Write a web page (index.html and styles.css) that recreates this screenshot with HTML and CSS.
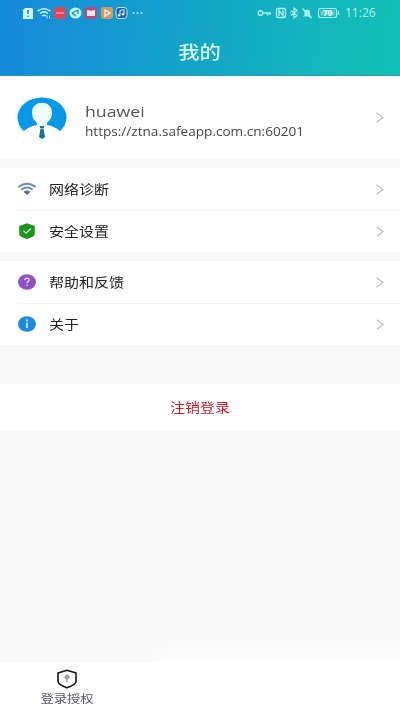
FILE: index.html
```html
<!DOCTYPE html>
<html lang="zh-CN">
<head>
<meta charset="utf-8">
<title>我的</title>
<link rel="stylesheet" href="styles.css">
</head>
<body>
<svg width="0" height="0" class="defs"><symbol id="chevron" viewBox="0 0 8 11"><path d="M.8.8 7 5.5.8 10.2" fill="none" stroke="#bebebe" stroke-width="1.3"/></symbol></svg>
<div class="app">
  <header class="header">
    <div class="status">
      <svg class="status-left" width="124" height="14" viewBox="0 0 124 14">
        <path d="M3 2h7l1 1v10H1V4z" fill="#c9fbf8"/><path d="M6 4v4M6 9.500v1.500" stroke="#187a9c" stroke-width="1.500"/>
        <g fill="none" stroke="#bdf3f5" stroke-width="1.500"><path d="M15.500 5.200q6.500-5 13 0M18 7.600q4-3.400 8 0M20 10q2-1.600 4 0"/><path d="M25 9.500v3M27.500 9.500v3" stroke-width="1"/></g>
        <rect x="32" y="1" width="12" height="12" rx="3" fill="#d8485c"/><path d="M34 7h8" stroke="#f7a9a9" stroke-width="1.200"/>
        <ellipse cx="53.500" cy="7" rx="6" ry="5.500" fill="#bdf6f5"/><path d="M50 7l6-3M50 7l4 3M56 4v4" fill="none" stroke="#1587b5" stroke-width="1.200"/>
        <rect x="63" y="1" width="12" height="12" rx="3" fill="#b64d79"/><path d="M65 4l4 .7 4-.7v6H65z" fill="#ffe3ed"/>
        <rect x="79" y="1" width="12" height="12" rx="3" fill="#c99a67"/><path d="M83 4l5 3-5 3z" fill="none" stroke="#fff2ce" stroke-width="1.300"/>
        <rect x="94" y="1.500" width="11" height="11" rx="3" fill="#2462a9" stroke="#b2e7fa"/><path d="M98 9V4.500l4-1V8" fill="none" stroke="#d8faff"/><circle cx="97" cy="9.300" r="1.300" fill="#d8faff"/><circle cx="101" cy="8.300" r="1.300" fill="#d8faff"/>
        <g fill="#b4f0ee"><circle cx="111.500" cy="7" r="1"/><circle cx="115.500" cy="7" r="1"/><circle cx="119.500" cy="7" r="1"/></g>
      </svg>
      <div class="status-right">
        <svg width="84" height="14" viewBox="0 0 84 14" fill="none" stroke="#a9f1e8" stroke-width="1.400">
          <circle cx="3.500" cy="7" r="2.300"/><path d="M6 7h8M10.500 7v2.500M13 7v2"/>
          <rect x="19.500" y="2.500" width="9" height="9" rx="1.500"/><path d="M22 10V4.500l4 5V4"/>
          <path d="M34 4.500l6 5-3 2.500V2l3 2.500-6 5M33 7h1M40.500 7h1" stroke-width="1.200"/>
          <path d="M46 10.500h8.500L53 9V6c0-3-5-3.500-5.500 0v3zM49 12h3" fill="#a9f1e8" stroke="none"/><path d="M45.500 2.500l9 9.500"/>
          <rect x="61.500" y="2.500" width="18" height="9" rx="2" stroke-width="1.200"/><rect x="63.500" y="4.500" width="14" height="5" fill="#63d3cf" stroke="none"/><path d="M81.500 5v4"/>
          <text x="70.500" y="10" class="battery">70</text>
        </svg>
        <span class="time">11:26</span>
      </div>
    </div>
    <h1><span class="wide">我的</span></h1>
  </header>
  <section class="profile">
    <svg class="avatar" width="50" height="42" viewBox="0 0 50 42">
      <ellipse cx="25" cy="20.500" rx="24.500" ry="20" fill="#0698e8"/>
      <path d="M3 42c2-8 7-12 17-14h10c10 2 15 6 17 14z" fill="#fff"/>
      <path d="M15 15.500c0-13 20-13 20 0 0 6-2.500 7.500-5 10.500v3H20v-3c-2.500-3-5-4.500-5-10.500z" fill="#effdff"/>
      <path d="M22.500 29h5L26.500 31.500h-3zM23.500 32h3l1.500 8-3 2-3-2z" fill="#16719f"/>
    </svg>
    <div class="identity"><div class="name">huawei</div><div class="url">https://ztna.safeapp.com.cn:60201</div></div>
    <svg class="chevron"><use href="#chevron"/></svg>
  </section>
  <section class="group">
    <div class="row">
      <svg class="icon" viewBox="0 0 18 16"><g fill="none" stroke="#6b89c5" stroke-width="2"><path d="M.4 6q8.600-6.500 17.200 0M3.300 8.700q5.700-4.400 11.400 0"/></g><path d="M5.500 10.700q3.500-2.400 7 0L9 14z" fill="#536ca8"/></svg>
      <span class="wide">网络诊断</span><svg class="chevron"><use href="#chevron"/></svg>
    </div>
    <div class="row">
      <svg class="icon" viewBox="0 0 18 16"><path d="M9 .3 16.800 3v8c0 2-3 3.700-7.800 5-4.800-1.300-7.800-3-7.800-5V3z" fill="#1c9521"/><path d="M5.500 7.800 8.300 10.200 12.800 5.500" fill="none" stroke="#ccf1c8" stroke-width="1.200"/></svg>
      <span class="wide">安全设置</span><svg class="chevron"><use href="#chevron"/></svg>
    </div>
  </section>
  <section class="group">
    <div class="row">
      <svg class="icon" viewBox="0 0 18 16"><ellipse cx="9" cy="8" rx="9" ry="7.700" fill="#9152c6"/><path d="M6.800 6.200c0-3 4.700-2.700 4.400 0C11 7.500 9 7.500 9 9.300M9 10.500V12" fill="none" stroke="#efdcff" stroke-width="1.300"/></svg>
      <span class="wide">帮助和反馈</span><svg class="chevron"><use href="#chevron"/></svg>
    </div>
    <div class="row">
      <svg class="icon" viewBox="0 0 18 16"><ellipse cx="9" cy="8" rx="9" ry="7.700" fill="#1e89e0"/><path d="M9 3.500v1.700M9 6.500V12" stroke="#c5f2ff" stroke-width="1.700"/></svg>
      <span class="wide">关于</span><svg class="chevron"><use href="#chevron"/></svg>
    </div>
  </section>
  <div class="logout"><span class="wide">注销登录</span></div>
  <nav class="tabs">
    <div class="tab">
      <svg width="22" height="20" viewBox="0 0 22 20"><path d="M11 1.200 20 4v8.500c0 2.500-4.500 4.500-9 6.200-4.500-1.700-9-3.700-9-6.200V4z" fill="#fff" stroke="#151515" stroke-width="1.600" stroke-linejoin="round"/><circle cx="11" cy="8" r="2.500" fill="#a0a0a0"/><path d="M11 9v4.500" stroke="#a0a0a0" stroke-width="1.400"/></svg>
      <span class="wide">登录授权</span>
    </div>
  </nav>
  <div class="haze"></div>
</div>
</body>
</html>
```
FILE: styles.css
```css
* { box-sizing: border-box; }
body { margin: 0; font-family: "Open Sans", "Noto Sans CJK SC", sans-serif; }
.defs { position: absolute; }
svg { display: block; flex: none; }
.app { position: relative; width: 400px; height: 711px; background: #f8f8f8; display: flex; flex-direction: column; overflow: hidden; }
.header { height: 76px; background: linear-gradient(95deg, #1789dc, #13a6c6 52%, #12c2b5); border-bottom: 1px solid #269eb0; }
.status { height: 25px; padding: 0 23px 0 22px; display: flex; justify-content: space-between; align-items: center; }
.status-right { display: flex; align-items: center; gap: 4px; }
.time { width: 32px; font-size: 12px; line-height: 14px; color: #b6f5e9; white-space: nowrap; }
.battery { font: 700 8px "Open Sans", sans-serif; fill: #e0fff8; stroke: none; text-anchor: middle; }
.wide { display: inline-block; transform: scaleX(1.154); transform-origin: left; white-space: nowrap; }
h1 { margin: 0; padding-top: 3px; height: 50px; font-size: 18.5px; line-height: 48px; font-weight: 500; text-align: center; color: #d5fffa; }
h1 .wide, .logout .wide, .tab .wide { transform-origin: center; }
.profile { height: 83px; padding: 0 16px 0 17px; display: flex; align-items: center; background: #fff; }
.identity { flex: 1; margin-left: 18px; padding-top: 6px; white-space: nowrap; }
.name { font-size: 15px; line-height: 22px; color: #555; transform: scaleX(1.18); transform-origin: left; }
.url { font-size: 12px; line-height: 20px; color: #444; transform: scaleX(1.132); transform-origin: left; }
.chevron { width: 8px; height: 11px; }
.group { margin-top: 9px; background: #fff; }
.row { height: 42px; padding: 0 16px 0 18px; display: flex; align-items: center; font-size: 13px; color: #222; }
.row .wide { padding-bottom: 2px; }
.row + .row { background: linear-gradient(#f2f2f2, #f2f2f2) 17px 0 / 383px 1px no-repeat; }
.icon { width: 18px; height: 16px; margin-right: 13px; }
.row .chevron { margin-left: auto; }
.logout { height: 47px; margin-top: 39px; background: #fff; text-align: center; line-height: 47px; font-size: 13px; color: #c51d25; }
.tabs { height: 49px; margin-top: auto; background: #fff; display: flex; }
.tab { width: 133px; padding-top: 7px; display: flex; flex-direction: column; align-items: center; font-size: 11.5px; line-height: 19px; color: #555861; }
.haze { position: absolute; left: 145px; right: 0; bottom: 0; height: 78px; background: linear-gradient(transparent, #fff 50%); -webkit-mask-image: linear-gradient(90deg, transparent, #000 25px); mask-image: linear-gradient(90deg, transparent, #000 25px); }
```
